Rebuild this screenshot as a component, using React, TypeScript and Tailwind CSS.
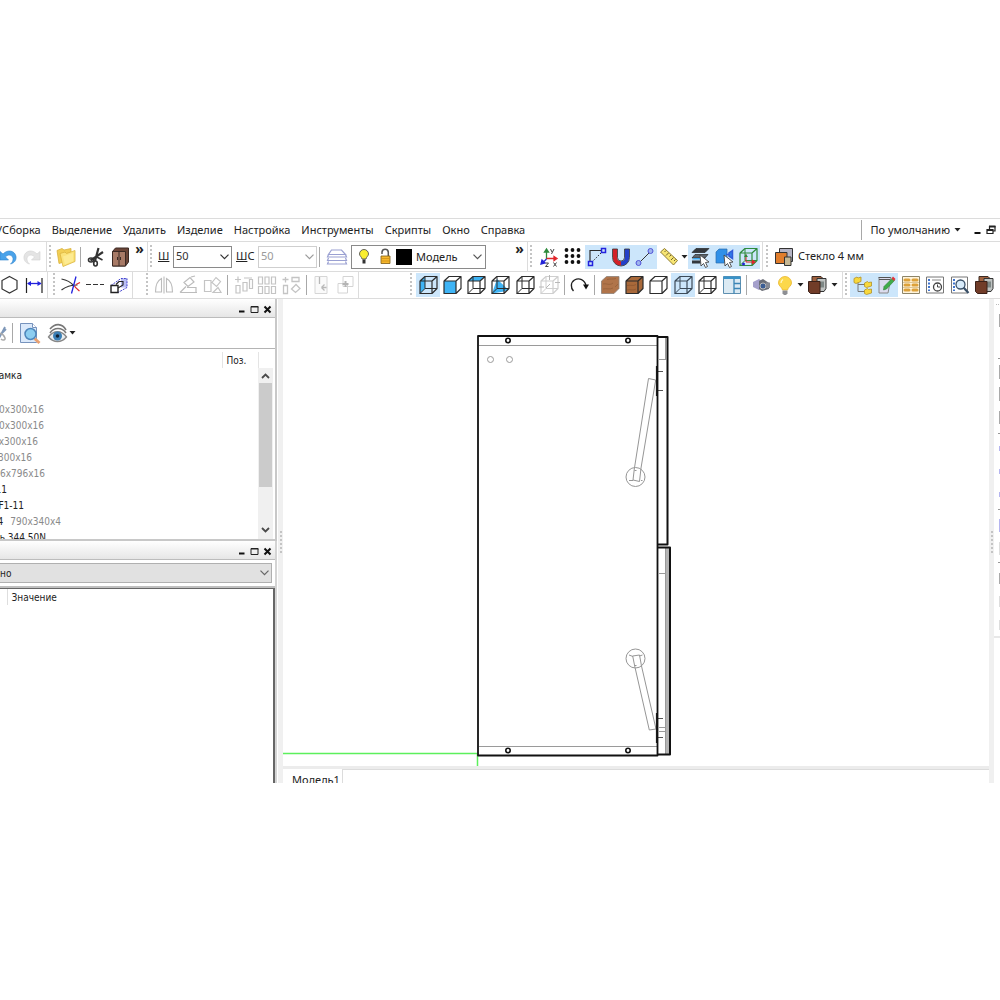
import type { ReactNode } from 'react';
import clsx from 'clsx';

const INK = '#2c2c2c';
const BLUE = '#3fb4f5';
const GRAY = '#c4c4c4';

type ToolProps = {
  label: string;
  active?: boolean;
  menu?: boolean;
  className?: string;
  children: ReactNode;
};

function Icon({ children }: { children: ReactNode }) {
  return (
    <svg width="24" height="24" viewBox="0 0 24 24" fill="none" className="block shrink-0" aria-hidden="true">
      {children}
    </svg>
  );
}

function Tool({ label, active, menu, className, children }: ToolProps) {
  return (
    <button
      type="button"
      aria-label={label}
      className={clsx('flex h-6 shrink-0 items-center', active && 'bg-[#cce6fb]', className)}
    >
      <Icon>{children}</Icon>
      {menu && <Caret />}
    </button>
  );
}

function Caret() {
  return (
    <svg width="7" height="4" viewBox="0 0 7 4" className="shrink-0" aria-hidden="true">
      <path d="M0.5 0h6l-3 3.5z" fill="#222" />
    </svg>
  );
}

function Chevron({ className }: { className?: string }) {
  return (
    <svg width="9" height="6" viewBox="0 0 9 6" fill="none" className={clsx('pointer-events-none', className)} aria-hidden="true">
      <path d="M0.5 0.7l4 4 4-4" stroke="currentColor" strokeWidth="1.2" />
    </svg>
  );
}

// heavier arrow used by the list scrollbar
function ScrollArrow({ className }: { className?: string }) {
  return (
    <svg width="9" height="6" viewBox="0 0 9 6" fill="none" className={className} aria-hidden="true">
      <path d="M1 1l3.500 3.500 3.500-3.500" stroke="#4a4a4a" strokeWidth="1.800" />
    </svg>
  );
}

const Divider = ({ className }: { className?: string }) => (
  <div className={clsx('w-px shrink-0 self-stretch bg-[#dcdcdc]', className)} />
);

const Sep = ({ className }: { className?: string }) => (
  <div className={clsx('h-5 w-px shrink-0 bg-[#a8a8a8]', className)} />
);

const Grip = ({ className }: { className?: string }) => (
  <div
    className={clsx(
      'h-6 w-0.5 shrink-0 bg-[repeating-linear-gradient(to_bottom,#c4c4c4_0px,#c4c4c4_2px,transparent_2px,transparent_4px)]',
      className,
    )}
  />
);

function More() {
  return (
    <button type="button" aria-label="Ещё" className="w-[15px] shrink-0 self-start text-center text-[14px] leading-[14px] font-bold text-[#222]">
      »
    </button>
  );
}

function SizeSelect({ id, disabled }: { id: string; disabled?: boolean }) {
  return (
    <div className={clsx('relative w-[59px] shrink-0', disabled ? 'text-[#9a9a9a]' : 'text-[#333]')}>
      <select
        id={id}
        disabled={disabled}
        className={clsx(
          'block h-[22px] w-full appearance-none border bg-white pl-0.5 text-[11px] opacity-100',
          disabled ? 'border-[#cfcfcf]' : 'border-[#8a8a8a]',
        )}
      >
        <option>50</option>
      </select>
      <Chevron className="absolute top-2 right-[3px]" />
    </div>
  );
}

function Cube({ face, stroke = INK, fill = BLUE }: { face?: 'left' | 'front' | 'top' | 'cut' | 'solid'; stroke?: string; fill?: string }) {
  const hidden = face !== 'front' && face !== 'solid';
  return (
    <>
      {face === 'left' && <path d="M4 8l5-4.500v12l-5 5z" fill={fill} />}
      {face === 'front' && <path d="M4 8h12v12.500h-12z" fill={fill} />}
      {face === 'top' && <path d="M4 8l5-4.500h12l-5 4.500z" fill={fill} />}
      {face === 'cut' && <path d="M9 6l11.500 11-4.500 1.500-12 2z" fill={fill} />}
      {face === 'solid' && <path d="M4 8l5-4.500h12v12l-5 5h-12z" fill={fill} />}
      {hidden && <path d="M9 3.500v12h12M9 15.500l-5 5" stroke={stroke} strokeWidth="1" />}
      <path d="M4 8h12v12.500h-12zM4 8l5-4.500h12l-5 4.500M21 3.500v12l-5 5" stroke={stroke} strokeWidth="1.200" strokeLinejoin="round" />
    </>
  );
}

function Cursor() {
  return <path d="M12 10l9 7-3.500.5 2 4-2 1-2-4-2.500 2.500z" fill="#fff" stroke="#444" strokeWidth=".9" />;
}

function Bulb() {
  return (
    <>
      <path d="M12 3.500a6.500 6.500 0 0 0-6.500 6.500c0 3 3.500 4 4 7h5c.5-3 4-4 4-7a6.500 6.500 0 0 0-6.500-6.500z" fill="#fcd84a" stroke="#e8b52c" strokeWidth=".8" />
      <path d="M10 6.500c-1.500 1-2 2-2 3.500" stroke="#fff6c0" strokeWidth="1.300" />
      <path d="M9.500 17.500h5v3l-1.500 1.500h-2l-1.500-1.500z" fill="#8d8f94" />
    </>
  );
}

function Boards() {
  return (
    <>
      <path d="M7 3.500h9l2 2v11h-11z" fill="#a0623f" stroke="#3a2a22" />
      <path d="M12 5.500h9v10l-2 3h-7z" fill="#bfc3c2" stroke="#333" />
      <path d="M15 8.500h4v6h-4z" fill="#7d8785" />
      <path d="M3.500 8.500h11.500v12h-9.500l-2-2z" fill="#713c28" stroke="#3a2018" />
    </>
  );
}

function MainToolbar() {
  return (
    <div className="flex h-[30px] items-center border-b border-[#dcdcdc]">
      <Tool label="Отменить" className="-ml-1">
        <path d="M4 6.500v8.500h8.500l-3-3c2.500-3 7-2.500 7.500 1.500.3 2-.8 4-2.500 5.500 4-1 6-4 5.500-7.500-1-6-8.500-7.500-13-2.500z" fill="#4aa3ea" stroke="#2d83cc" strokeWidth=".6" />
      </Tool>
      <Tool label="Повторить">
        <path d="M20 6.500v8.500h-8.500l3-3c-2.500-3-7-2.500-7.500 1.500-.3 2 .8 4 2.500 5.500-4-1-6-4-5.500-7.500 1-6 8.500-7.500 13-2.500z" fill="#e4e4e4" stroke="#d2d2d2" strokeWidth=".6" />
      </Tool>
      <Divider className="ml-0.5" />
      <Grip className="ml-0.5" />
      <Tool label="Открыть" className="ml-[3px]">
        <path d="M3 5.500l5-2 2 1.500 7-1.500v11l-12 4z" fill="#f2cf55" stroke="#d9b13c" strokeWidth=".8" />
        <path d="M6 8.500l5-1.500 1.500 1.500 8.500-3v11l-12 5z" fill="#fbe37a" stroke="#dcb540" strokeWidth=".8" />
        <path d="M9 11.500l10-3.500v8l-8 3.500z" fill="#fdeb92" />
      </Tool>
      <Sep className="ml-0.5" />
      <Tool label="Вырезать" className="ml-[3px]">
        <path d="M14.500 3l-3.500 13M19 7l-12.500 8.500" stroke="#333" strokeWidth="2.200" />
        <ellipse cx="7" cy="15" rx="2.500" ry="2" stroke="#333" strokeWidth="1.600" />
        <ellipse cx="11.500" cy="18.500" rx="1.800" ry="2.500" stroke="#333" strokeWidth="1.600" />
        <path d="M12 11.500l6.500 3.500" stroke="#333" strokeWidth="1.600" />
      </Tool>
      <Tool label="Шкаф">
        <path d="M4.500 6.500l3-3.500h13v14l-3 4h-13z" fill="#6b4537" stroke="#3c2a24" />
        <path d="M4.500 6.500h13v14.500h-13z" fill="#a87a66" stroke="#3c2a24" />
        <path d="M11 6.500v14.500M9.500 12v3M12.500 12v3" stroke="#3c2a24" />
      </Tool>
      <More />
      <Divider />
      <Grip className="ml-0.5" />
      <label htmlFor="width" className="ml-[6px] w-[15px] shrink-0 underline">Ш</label>
      <SizeSelect id="width" />
      <label htmlFor="stroke-width" className="ml-1 w-[22px] shrink-0"><u>Ш</u>С</label>
      <SizeSelect id="stroke-width" disabled />
      <Sep className="ml-0.5" />
      <Tool label="Слои" className="ml-[5px]">
        <path d="M6.500 5h10l4 4.500h-17zM3.500 9.500l-1 2.500h19l-1-2.500M3.500 13l-1 2.500h19l-1-2.500M3.500 16.500l-1 2.500h19l-1-2.500" stroke="#9aa0d2" strokeWidth="1.200" />
      </Tool>
      <div className="relative ml-0.5 flex h-6 w-[135px] shrink-0 items-center border border-[#8a8a8a]">
        <svg width="52" height="22" viewBox="0 0 52 22" fill="none" className="shrink-0" aria-hidden="true">
          <path d="M12 3.500a4.500 4.500 0 0 0-4.500 4.500c0 2 2 2.500 2.500 5h4c.5-2.500 2.500-3 2.500-5a4.500 4.500 0 0 0-4.500-4.500z" fill="#f9ee2f" stroke="#555" strokeWidth=".9" />
          <path d="M10.500 13.500h3v4h-3z" fill="#333" />
          <path d="M30 8v-2a3.200 3.200 0 0 1 6.300 0v4.500" stroke="#555" strokeWidth="1.500" />
          <path d="M29 10h9v7.500h-9z" fill="#f6b72c" stroke="#7c5a14" strokeWidth=".8" />
          <path d="M29.500 12.500h8M29.500 15h8" stroke="#c98b14" strokeWidth=".7" />
        </svg>
        <span className="-ml-2 size-4 shrink-0 bg-black" />
        <select aria-label="Слой" className="min-w-0 flex-1 appearance-none bg-transparent pl-1 text-[11px] leading-5">
          <option>Модель</option>
        </select>
        <Chevron className="absolute right-[3px] text-[#555]" />
      </div>
      <div className="w-[26px] shrink-0" />
      <More />
      <Divider />
      <Grip className="ml-0.5" />
      <Tool label="Оси координат" className="ml-[5px]">
        <path d="M9.500 14v-9M7.500 7l2-3 2 3z" stroke="#2e8b3c" strokeWidth="1.300" fill="#2e8b3c" />
        <path d="M9.500 13.500h8M17 11.500l3 2-3 2z" stroke="#e0252b" strokeWidth="1.300" fill="#e0252b" />
        <path d="M9.500 14l-3 3M4 19l1-4 3 3z" stroke="#2424d8" strokeWidth="1.300" fill="#2424d8" />
        <path d="M13.500 4l1.500 3M17 4l-2.500 5M8.500 18h3l-3 3.500h3M16.500 17.500l3 4M19.500 17.500l-3 4" stroke="#444" strokeWidth="1" />
      </Tool>
      <Tool label="Сетка">
        {[5, 11, 17].map((y) => [5, 11, 17].map((x) => <circle key={`${x}-${y}`} cx={x + 0.5} cy={y} r="1.900" fill="#111" />))}
      </Tool>
      <Tool label="Привязка к углу" active>
        <path d="M5 17v-11.500h12" stroke={INK} strokeWidth="1.200" />
        <path d="M6.500 17.500l11-11" stroke={INK} strokeDasharray="1.500 1.500" />
        <path d="M3.500 16.500h4v4h-4zM16.500 3.500h4v4h-4z" stroke="#2222dd" strokeWidth="1.500" fill="#cce4f7" />
      </Tool>
      <Tool label="Магнит" active>
        <path d="M6 4v8.500c0 3.500 2.500 6 6 6" stroke="#d22027" strokeWidth="4.500" />
        <path d="M18 4v8.500c0 3.500-2.500 6-6 6" stroke="#2340c8" strokeWidth="4.500" />
        <path d="M3.500 4h5v8.500a3.500 3.500 0 0 0 7 0v-8.500h5v8.500a8.500 8.500 0 0 1-17 0z" stroke="#333" strokeWidth=".8" />
      </Tool>
      <Tool label="Отрезок" active>
        <path d="M6 18l12-12" stroke="#333" />
        <circle cx="5.500" cy="18" r="2.500" fill="#9db4ee" stroke="#5353d8" />
        <circle cx="17.500" cy="6" r="2.500" fill="#9db4ee" stroke="#5353d8" />
      </Tool>
      <Tool label="Линейка" menu className="w-[31px]">
        <path d="M3.500 7l4-3.500 13 12-4 4.500z" fill="#f7e573" stroke="#8f7d33" />
        <path d="M9 5.500l-1.500 1.500M11.500 8l-2.500 2.500M14 10l-1.500 1.500M16.500 12.500l-2.500 2.500M18.500 14.500l-1.500 1.500" stroke="#6f6230" />
      </Tool>
      <Tool label="Выбор слоя" active>
        <path d="M8 3.500h13l-4 4h-13z" fill="#33373c" stroke="#222" strokeWidth=".7" />
        <path d="M7 9.500h13l-3 3.500h-13z" fill="#5d656d" stroke="#222" strokeWidth=".7" />
        <path d="M4 15.500h8l1 3h-9z" fill="#33373c" />
        <path d="M4 14.500l2-1.500h8l-1 1.500z" fill="#38a5ee" />
        <Cursor />
      </Tool>
      <Tool label="Выбор детали" active>
        <path d="M4 7l3-3h8v10l-3 4h-8z" fill="#3090e8" stroke="#2b6fae" strokeWidth=".7" />
        <path d="M14 9.500h3M20.500 5.500l-3.500 2.500v3l3.500 2.500z" stroke="#2f5bd8" strokeWidth="1.500" fill="#2f7be8" />
        <Cursor />
      </Tool>
      <Tool label="Габариты" active>
        <Cube stroke="#2e8b3c" />
        <path d="M10 9.500v7.500h8" stroke="#d22" strokeWidth="1" />
        <path d="M8 12l2-3 2 3z" fill="#2e8b3c" />
        <path d="M16 14.500l4 2.500-4 2.500z" fill="#e0252b" />
        <circle cx="7.500" cy="19" r="1.500" fill="#2424d8" />
      </Tool>
      <Divider className="ml-0.5" />
      <Grip className="ml-[3px]" />
      <button type="button" className="ml-1 flex shrink-0 items-center gap-0.5 whitespace-nowrap">
        <Icon>
          <path d="M7.500 3.500h13v13h-13z" fill="#b5b4c4" stroke="#333" />
          <path d="M3.500 7.500h11.500v11h-11.500z" fill="#e07d2c" stroke="#333" />
          <path d="M12.500 12h6.500v8.500h-6.500z" fill="#c5b794" stroke="#333" />
        </Icon>
        Стекло 4 мм
      </button>
    </div>
  );
}

function ViewToolbar() {
  return (
    <div className="flex h-[27px] items-center border-b border-[#dcdcdc]">
      <Tool label="Многоугольник" className="-ml-[3px]">
        <path d="M12.500 3.500l7.500 4v8.500l-7.500 4-7.500-4v-8.500z" stroke="#333" strokeWidth="1.200" />
      </Tool>
      <Tool label="Размер" className="ml-px">
        <path d="M4.500 5v15M20 5v15" stroke="#222" strokeWidth="1.200" />
        <path d="M6 10.500h13" stroke="#2222dd" strokeWidth="1.300" />
        <path d="M5 10.500l4-2.500v5zM19.500 10.500l-4-2.500v5z" fill="#2222dd" />
      </Tool>
      <Divider className="ml-px" />
      <Grip className="ml-[5px]" />
      <Tool label="Обрезать" className="ml-[3px]">
        <path d="M3.500 6c6 1 10 4 12.500 7M3.500 17c5-4 9-5 16-5" stroke="#333" strokeWidth="1.200" />
        <path d="M13.500 20.500l4.500-17" stroke="#2222dd" strokeWidth="1.300" />
        <path d="M16.500 13c1 2 2.500 3 5 5M18 11.500l4-2" stroke="#e0252b" strokeWidth="1.200" />
      </Tool>
      <Tool label="Тип линии">
        <path d="M4 11.500h18" stroke="#333" strokeWidth="1.200" strokeDasharray="5 2" />
      </Tool>
      <Tool label="Выдавить" className="ml-px">
        <path d="M14 5.500h6v9h-6z" fill="#b9bef3" />
        <path d="M4 12.500l10-7h6v9l-9 5" stroke="#4343cf" strokeDasharray="2 1" />
        <path d="M4 12.500h7v7h-7z" stroke="#222" strokeWidth="1.400" fill="#fff" />
        <path d="M11 15l5-3v-3.500h-4l-3 3" stroke="#222" strokeWidth="1.100" />
      </Tool>
      <Divider className="ml-px" />
      <Grip className="ml-[13px]" />
      <Tool label="Зеркало" className="ml-1">
        <path d="M12 3.500v17M9.500 5.500v13.500h-6c0-7 2-11.500 6-13.500zM14.500 5.500v13.500h6c0-7-2-11.500-6-13.500z" stroke="#bcbcbc" strokeWidth="1.100" />
      </Tool>
      <Tool label="Повернуть">
        <path d="M4 19.500h17M4 19.500l6-6M11 14.500h9v4.500M8 9.500l6-5 4 4.500-6 4.500zM15 4l4-1" stroke="#bcbcbc" strokeWidth="1.200" />
      </Tool>
      <Tool label="Наклонить">
        <path d="M4.500 7.500h6.500v11h-6.500zM12 9.500l4-5 4.500 4-4 5zM13 19.500h8l-3-5z" stroke={GRAY} strokeWidth="1.200" />
      </Tool>
      <Sep className="ml-[3px]" />
      <Tool label="Массив" className="ml-[3px]">
        <path d="M5 12.500h4v7.500h-4zM12 9.500h4v8.500h-4zM18.500 6.500h3v9h-3zM4 6.500h6M7 3.500v6M13 5h8" stroke={GRAY} strokeWidth="1.200" />
      </Tool>
      <Tool label="Сетка копий">
        <path d="M3.500 4h4v7h-4zM10 4h4v7h-4zM16.500 4h4v7h-4zM3.500 13.500h4v7h-4zM10 13.500h4v7h-4zM16.500 13.500h4v7h-4z" stroke={GRAY} strokeWidth="1.200" />
      </Tool>
      <Tool label="Копии по контуру">
        <path d="M3.500 6.500h6M6.500 4v5.500M13 4.500h7v4h-7zM4.500 12.500h4v8h-4zM12.500 16l4.500-4.500 4 4-4.500 4z" stroke={GRAY} strokeWidth="1.300" />
      </Tool>
      <Sep className="ml-[3px]" />
      <Tool label="Вставить" className="ml-0.5">
        <path d="M6 3.500h12v17h-12z" stroke="#d6d6d6" fill="#fafafa" />
        <path d="M10.500 4v7M12.500 14.500h5M12.500 14.500l3-3M12.500 14.500l3 3" stroke="#b8b8b8" strokeWidth="1.300" />
      </Tool>
      <Tool label="Добавить">
        <path d="M10 3.500h10v10h-10zM5 10.500h9.500v9.500h-9.500z" stroke="#d4d4d4" />
        <path d="M9.500 11h6M12.500 8v6" stroke="#b4b4b4" strokeWidth="2" />
      </Tool>
      <Divider className="ml-px" />
      <Grip className="ml-[51px]" />
      <Tool label="Вид слева" active className="ml-1"><Cube face="left" /></Tool>
      <Tool label="Вид спереди"><Cube face="front" /></Tool>
      <Tool label="Вид сверху"><Cube face="top" /></Tool>
      <Tool label="Сечение"><Cube face="cut" /></Tool>
      <Tool label="Изометрия" className="ml-px"><Cube /></Tool>
      <Tool label="Разнести">
        <Cube stroke="#cfcfcf" />
        <path d="M2 14h5M18 9.500h5M12.500 2v5M9 15l4-4" stroke="#b8b8b8" />
      </Tool>
      <Sep className="ml-[3px]" />
      <Tool label="Вращать" className="ml-0.5">
        <path d="M6.500 18c-3-3-3-8.500 1-11 4.500-2.500 10.500-.5 11.500 6" stroke="#222" strokeWidth="1.400" />
        <path d="M16 11.500h6l-3 5z" fill="#111" />
      </Tool>
      <Sep className="ml-[3px]" />
      <Tool label="Текстура" className="ml-[3px]">
        <path d="M3.500 8l5-4.500h12.500v12l-5 5h-12.500z" fill="#b0744a" stroke="#8d8078" strokeWidth=".8" />
        <path d="M5 11c4-1 6 2 10-1M5 16c4-1 6 1 10-1M9 6.500c3-1 6 0 9-1M17 14l3-3" stroke="#94603a" strokeWidth=".8" />
      </Tool>
      <Tool label="Текстура с контуром">
        <Cube face="solid" fill="#a9693a" />
        <path d="M5 12.500c4-1 6 1 9-1M5 17c4-1 6 1 9-1" stroke="#8d5630" strokeWidth=".8" />
      </Tool>
      <Tool label="Без невидимых линий"><Cube face="solid" fill="#fff" /></Tool>
      <Tool label="Каркас" active className="ml-px"><Cube stroke="#3c4a58" /></Tool>
      <Tool label="Каркас полный"><Cube /></Tool>
      <Tool label="Окна" className="ml-px">
        <path d="M3.500 3.500h17v17h-17z" fill="#dbeaf3" stroke="#5d8fb0" />
        <path d="M3.500 3.500h17v2.500h-17z" fill="#3a93c8" />
        <path d="M14 6v14.500M14 10.500h6.500M14 15.500h6.500" stroke="#3a85b5" strokeWidth="1.300" />
      </Tool>
      <Sep className="ml-0.5" />
      <Tool label="Камера" className="ml-0.5">
        <path d="M4 9l6-3 3 2v7l-3 2-6-3z" fill="#a5a0cc" />
        <path d="M10 8l4-2 6 4v6l-7 2-3-2z" fill="#6a6d76" />
        <circle cx="14" cy="13" r="3" fill="#3b5d94" stroke="#bbb" />
        <path d="M17 9.500h4v5.500h-4z" fill="#888b95" />
      </Tool>
      <Tool label="Освещение" menu className="w-8"><Bulb /></Tool>
      <Tool label="Материалы" menu className="w-9 gap-[2px]"><Boards /></Tool>
      <Divider className="ml-px" />
      <Grip className="ml-0.5" />
      <Tool label="Структура" active className="ml-[3px]">
        <path d="M8 9v9.500h7M8 11.500h7" stroke="#777" />
        <path d="M4 5.500l3-1.500 1 1 3-1v4.500l-5 2-2-1zM14.500 10l3-1.500 1 1 3-.5v4l-5 1.500-2-1zM14.500 17l3-1.500 1 1 3-.5v4l-5 1.500-2-1z" fill="#f8d83c" stroke="#b3922a" strokeWidth=".8" />
      </Tool>
      <Tool label="Свойства" active>
        <path d="M5 4.500h12l-3 15.500h-9z" fill="#dcdcee" stroke="#888" />
        <path d="M4.500 4.500h12M5 6.500h11" stroke="#555" strokeWidth="1.200" />
        <path d="M18 5.500l2.500 2-8 8.500-3 1 .5-3.500z" fill="#40ac48" stroke="#2a7d32" strokeWidth=".6" />
        <path d="M17.500 5.500l1.500-2 2.500 2.500-1.500 2z" fill="#e2353a" />
      </Tool>
      <Tool label="Фурнитура" className="ml-px">
        <path d="M3.500 3.500h17v17h-17z" fill="#fff4dc" stroke="#8c8468" />
        {[7, 12, 17].map((y) => (
          <path key={y} d={`M6 ${y}h4M14 ${y}h4`} stroke="#dda13a" strokeWidth="3" strokeLinecap="round" />
        ))}
        <path d="M4 9.500h16M4 14.500h16" stroke="#c8a665" strokeWidth=".6" />
      </Tool>
      <Tool label="История">
        <path d="M3.500 4h17v16h-17z" fill="#fff" stroke="#777" />
        <path d="M6 6v12" stroke="#2a65c8" strokeWidth="1.800" strokeDasharray="2 1.500" />
        <path d="M9 7h9" stroke="#888" />
        <circle cx="14.500" cy="14" r="4" fill="#fff" stroke="#444" strokeWidth="1.300" />
        <path d="M14.500 11.500v2.500h2.500" stroke="#444" />
      </Tool>
      <Tool label="Поиск" className="ml-px">
        <path d="M3.500 4h16v16h-16z" fill="#fff" stroke="#777" />
        <path d="M6 6v12" stroke="#2a65c8" strokeWidth="1.800" strokeDasharray="2 1.500" />
        <circle cx="12.500" cy="11.500" r="4.500" fill="#d8ebfa" stroke="#3a5068" strokeWidth="1.300" />
        <path d="M15.500 14.500l5 5.500" stroke="#3a5068" strokeWidth="2.200" />
      </Tool>
      <Tool label="Каталог материалов"><Boards /></Tool>
    </div>
  );
}

function PanelTitle({ name }: { name: string }) {
  return (
    <div className="flex h-[19px] shrink-0 items-center justify-end gap-1 border-b border-[#bcbcbc] bg-linear-to-b from-white to-[#e6e6e6] pt-0.5 pr-[3px]">
      <button type="button" aria-label={`Свернуть: ${name}`}>
        <svg width="9" height="9" viewBox="0 0 9 9" className="block"><path d="M2 5.500h5.500v2h-5.500z" fill="#111" /></svg>
      </button>
      <button type="button" aria-label={`Развернуть: ${name}`}>
        <svg width="9" height="9" viewBox="0 0 9 9" fill="none" className="block"><path d="M1 1.500h7v6h-7zM1 2h7.500" stroke="#222" /></svg>
      </button>
      <button type="button" aria-label={`Закрыть: ${name}`}>
        <svg width="9" height="9" viewBox="0 0 9 9" className="block"><path d="M1.500 1.500l6 6M7.500 1.500l-6 6" stroke="#111" strokeWidth="2" /></svg>
      </button>
    </div>
  );
}

const rows = [
  { text: 'амка', width: 'w-[22px]' },
  { text: '', width: 'w-0' },
  { size: '0x300x16', width: 'w-[44px]' },
  { size: '0x300x16', width: 'w-[44px]' },
  { size: 'x300x16', width: 'w-[38px]' },
  { size: '300x16', width: 'w-[32px]' },
  { size: '46x796x16', width: 'w-[45px]' },
  { text: '11', width: 'w-[7px]' },
  { text: 'F1-11', width: 'w-[24px]' },
  { text: '4', size: '790x340x4', width: 'w-[61px]' },
  { text: 'ль 344 50N', width: 'w-[46px]' },
];

function StructurePanel() {
  return (
    <section className="flex h-[242px] flex-col border-r-2 border-b-2 border-[#c8c8c8]">
      <PanelTitle name="Структура" />
      <div className="flex h-[31px] shrink-0 items-center border-b border-[#b4b4b4]">
        <Tool label="Вырезать" className="-ml-4">
          <path d="M14 19l7-13M22 8l-6 6" stroke="#7e97b8" strokeWidth="1.800" />
          <path d="M14 12c4 0 6 2 7 5 .5 2-2 3-4 1" stroke="#aaa" strokeWidth="1.500" />
        </Tool>
        <Sep className="ml-1" />
        <Tool label="Найти" className="ml-[5px]">
          <path d="M2.500 2.500h12l4 4v15h-16z" fill="#dbe9fa" stroke="#7793bd" />
          <path d="M14.500 2.500v4h4" fill="#fff" stroke="#7793bd" />
          <path d="M16.500 17.500l5 4.500" stroke="#e8a071" strokeWidth="3" />
          <circle cx="12.500" cy="13" r="5.500" fill="#8ccdf0" stroke="#4e86bb" strokeWidth="1.500" />
        </Tool>
        <Tool label="Видимость" menu className="ml-[5px] w-[33px] [&>svg:last-child]:-ml-0.5">
          <path d="M3 8c5-6 12-6 16 1M3 12c4-6 12-6 16 0" stroke="#777" strokeWidth="1.600" />
          <path d="M1.500 16c5-7 13-7 18 0-5 6-13 6-18 0z" fill="#e9edf0" stroke="#888" strokeWidth="1.300" />
          <circle cx="10.500" cy="15" r="4.500" fill="#3b7fb5" />
          <circle cx="10.500" cy="15" r="1.800" fill="#123" />
        </Tool>
      </div>
      <div className="flex min-h-0 flex-1 overflow-hidden pt-[3px] pr-0.5">
        <table className="w-full table-fixed border-collapse self-start">
          <thead>
            <tr className="h-4">
              <th className="p-0" aria-label="Название" />
              <th className="w-[36px] border-l border-[#e4e4e4] p-0 pl-1 text-left font-normal">Поз.</th>
            </tr>
          </thead>
          <tbody>
            {rows.map((row, i) => (
              <tr key={i} className={row.width === 'w-0' ? 'h-[18px]' : 'h-4'}>
                <td className="p-0 leading-4">
                  <div className={clsx('flex justify-end gap-[7px] whitespace-nowrap', row.width)}>
                    {row.text && <span>{row.text}</span>}
                    {row.size && <span className="text-[#8a8a8a]">{row.size}</span>}
                  </div>
                </td>
                <td className="p-0" />
              </tr>
            ))}
          </tbody>
        </table>
        <div className="flex w-[15px] shrink-0 flex-col">
          <div className="h-4 border-l border-[#e4e4e4]" />
          <div className="flex flex-1 flex-col items-center bg-[#f0f0f0]">
            <ScrollArrow className="mt-[5px] mb-1 rotate-180" />
            <div className="h-[104px] w-[13px] bg-[#cbcbcb]" />
            <ScrollArrow className="mt-auto mb-[6px]" />
          </div>
        </div>
      </div>
    </section>
  );
}

function PropertiesPanel() {
  return (
    <section className="flex min-h-0 flex-1 flex-col border-r-2 border-[#d4d4d4]">
      <PanelTitle name="Свойства" />
      <div className="relative mt-[3px] mr-[3px] shrink-0">
        <select aria-label="Выбрано" className="block h-5 w-full appearance-none border border-l-0 border-[#b0b0b0] bg-[#e1e1e1] text-[10px]">
          <option>но</option>
        </select>
        <Chevron className="absolute top-[7px] right-[3px] text-[#666]" />
      </div>
      <div className="mt-[3px] flex flex-1 flex-col border-t-2 border-[#c0c0c0]">
        <div className="flex-1 border-t border-r-2 border-[#666]">
          <table className="w-full table-fixed border-collapse">
            <thead>
              <tr className="h-4">
                <th className="w-[7px] p-0" aria-label="Имя" />
                <th className="border-l border-[#dedede] p-0 pl-1 text-left font-normal">Значение</th>
              </tr>
            </thead>
          </table>
        </div>
      </div>
    </section>
  );
}

function Splitter() {
  return (
    <div className="flex w-[5px] shrink-0 justify-center bg-[#f0f0f0]">
      <Grip className="mt-[232px]" />
    </div>
  );
}

function Hinges() {
  return (
    <g stroke="#969696">
      <circle cx="635.500" cy="477" r="9.500" />
      <path d="M648.500 378.500l-14.200 90.500-1.300 11 6.500 1.500 1.500-13.500 14.700-88z" />
      <path d="M629 480.500h4M634.500 470.500h2M641 480.500h1.500" />
      <circle cx="635.500" cy="658.500" r="9.500" />
      <path d="M632.700 656l2 10 14.600 64 6.700-1-14.500-63-2-11z" />
      <path d="M629 655l4 1.500M639.500 656l3-1M634.500 665.500h2" />
    </g>
  );
}

function Drawing() {
  return (
    <svg viewBox="283 299 706 467" preserveAspectRatio="xMinYMin meet" fill="none" className="block h-full w-full" role="img" aria-label="Вид слева">
      <path d="M283 753.500h195M477.500 753v13" stroke="#5cf05c" strokeWidth="1.500" />
      <g stroke="#9a9a9a">
        <path d="M479 345.500h178M479 746.500h178M659 359.500h6M665.500 338v22M659 573.500h8M659 727.500h8M659 731.500h6" />
        <circle cx="490.500" cy="359.500" r="3" />
        <circle cx="509.500" cy="359.500" r="3" />
        <path d="M667.500 548v206" strokeWidth="3" stroke="#b4b4b4" />
        <path d="M665.500 548v206" />
      </g>
      <Hinges />
      <path d="M657 371.500h6M657 390.500h6M657 718.500h6M657 737.500h6" stroke="#555" />
      <path d="M656.500 366v30M656.500 713v30" stroke="#222" strokeWidth="1.200" />
      <g stroke="#111" strokeWidth="2" strokeLinejoin="round">
        <path d="M478 336h179.500v419.500h-179.500z" strokeWidth="1.800" />
        <path d="M658 337h9.500v207.500h-9.500M658 547.500h12v207h-12" />
      </g>
      <g stroke="#111" strokeWidth="1.600">
        <circle cx="508" cy="340.500" r="2.200" />
        <circle cx="628" cy="340.500" r="2.200" />
        <circle cx="508" cy="750.500" r="2.200" />
        <circle cx="628" cy="750.500" r="2.200" />
      </g>
    </svg>
  );
}

function SideTools() {
  return (
    <div className="w-[6px] shrink-0 overflow-hidden">
      <svg width="6" height="350" viewBox="994 299 6 350" fill="none" className="block" aria-hidden="true">
        <path d="M996 304.500h3" stroke="#bbb" strokeDasharray="1 1" />
        <path d="M998 358.500h2M998 433.500h2M998 509.500h2M998 562.500h2" stroke="#999" />
        <path d="M999.500 314v13M999.500 365v14M999.500 387v14M999.500 411v13M999.500 573v11" stroke="#aaa" />
        <path d="M999.500 446v5M999.500 469v5M999.500 492v5M999.500 519v13" stroke="#b5b5f0" />
        <path d="M999.500 542v13M999.500 596v11M999.500 620v10" stroke="#ddd" />
        <path d="M994 637h6" stroke="#e8e8e8" strokeWidth="2" />
      </svg>
    </div>
  );
}

const menu = ['/Сборка', 'Выделение', 'Удалить', 'Изделие', 'Настройка', 'Инструменты', 'Скрипты', 'Окно', 'Справка'];

export default function App() {
  return (
    <main className="bg-white py-[218px] font-['Noto_Sans','Open_Sans',sans-serif] text-[11px] text-[#222]">
      <div className="overflow-hidden border-t border-[#dcdcdc]">
        <header className="flex h-[23px] items-center border-b border-[#dcdcdc]">
          <nav className="flex gap-[11px]">
            {menu.map((item) => (
              <button key={item} type="button" className="first:-ml-0.5">{item}</button>
            ))}
          </nav>
          <Sep className="ml-auto h-4" />
          <button type="button" className="ml-[9px] flex items-center gap-1">
            По умолчанию
            <Caret />
          </button>
          <button type="button" aria-label="Свернуть" className="ml-3">
            <svg width="9" height="10" viewBox="0 0 9 10" className="block"><path d="M1.500 7h6v2h-6z" fill="#111" /></svg>
          </button>
          <button type="button" aria-label="Восстановить" className="mr-1 ml-1">
            <svg width="10" height="10" viewBox="0 0 10 10" fill="none" className="block">
              <path d="M3.500 4v-2.500h5.500v4.500h-2M1 4.500h6v4h-6z" stroke="#222" strokeWidth="1.200" />
              <path d="M3 1.500h6.500M1 5h6" stroke="#222" strokeWidth="2" />
            </svg>
          </button>
        </header>
        <MainToolbar />
        <ViewToolbar />
        <div className="flex h-[484px]">
          <aside className="flex w-[277px] shrink-0 flex-col font-['DejaVu_Sans_Condensed','DejaVu_Sans',sans-serif] text-[10px]">
            <StructurePanel />
            <PropertiesPanel />
          </aside>
          <div className="w-px shrink-0" />
          <Splitter />
          <div className="flex min-w-0 flex-1 flex-col">
            <div className="min-h-0 flex-1">
              <Drawing />
            </div>
            <div className="flex h-[17px] shrink-0 overflow-hidden border-t-3 border-[#ececec]">
              <button type="button" className="h-[22px] shrink-0 border-r border-[#dcdcdc] pr-0.5 pl-[9px] leading-4">Модель1</button>
              <div className="flex-1 border-t border-[#dcdcdc]" />
            </div>
          </div>
          <Splitter />
          <SideTools />
        </div>
      </div>
    </main>
  );
}
